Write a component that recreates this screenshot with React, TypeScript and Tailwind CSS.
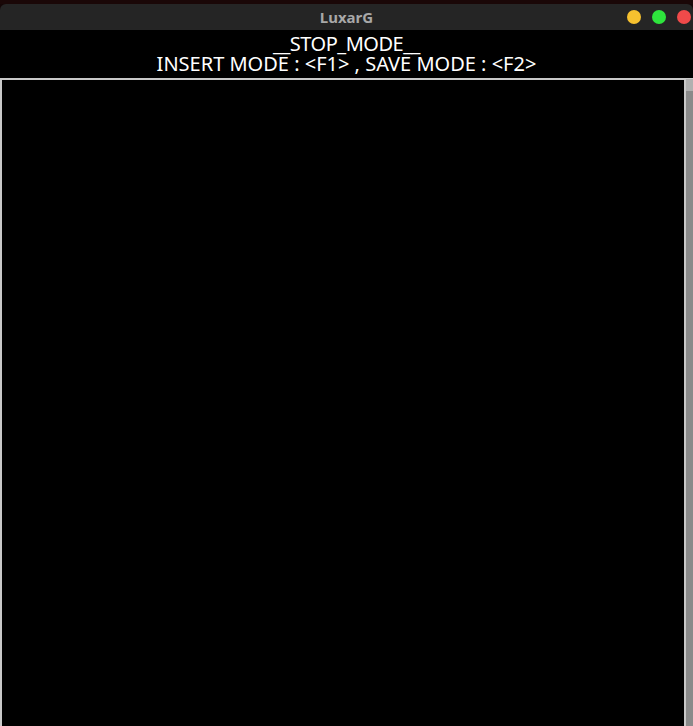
export default function App() {
  return (
    <div className="h-[726px] w-[693px] overflow-hidden bg-[#140606] flex flex-col" style={{ fontFamily: '"Noto Sans", sans-serif' }}>
      <div className="h-[4px] shrink-0 bg-[#1a0707]" />
      <div className="h-[26px] shrink-0 rounded-t-[6px] bg-[#252525] relative flex items-center justify-center">
        <span className="text-[15px] font-bold text-[#a8a8a8]">LuxarG</span>
        <div className="absolute right-[2px] top-[6px] flex gap-[11px]">
          <span className="h-[14px] w-[14px] rounded-full bg-[#f6c12f]" />
          <span className="h-[14px] w-[14px] rounded-full bg-[#2ee43d]" />
          <span className="h-[14px] w-[14px] rounded-full bg-[#f04a4a]" />
        </div>
      </div>
      <div className="flex-1 bg-black flex flex-col">
        <div className="h-[48px] shrink-0 flex flex-col items-center pt-[4px] text-white text-[20px] leading-[20px]">
          <span className="tracking-[-0.5px]">__STOP_MODE__</span>
          <span>INSERT MODE : &lt;F1&gt; , SAVE MODE : &lt;F2&gt;</span>
        </div>
        <div className="flex-1 flex">
          <div className="flex-1 border-t-[2px] border-l-[2px] border-r-[2px] border-[#c9c9c9] bg-black" />
          <div className="w-[7px] shrink-0 flex flex-col bg-[#8a8a8a] border-t border-[#c9c9c9]">
            <div className="h-[12px] bg-[#b0b0b0]" />
          </div>
        </div>
      </div>
    </div>
  );
}
